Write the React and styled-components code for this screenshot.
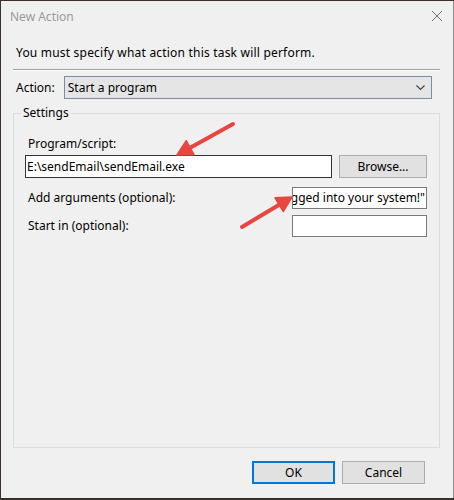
import React from "react";
import styled, { createGlobalStyle } from "styled-components";

const Global = createGlobalStyle`
  html, body { margin: 0; padding: 0; }
  body {
    background: #3a2f2a;
    width: 454px;
    height: 500px;
    overflow: hidden;
    font-family: "Noto Sans", "Open Sans", "Liberation Sans", sans-serif;
    font-size: 12px;
    color: #000;
  }
`;

const Window = styled.div`
  position: relative;
  margin: 1px 0 0 1px;
  width: 452px;
  height: 497px;
  background: #f0f0f0;
  border-right: 1px solid #8a8a8a;
  display: flex;
  flex-direction: column;
`;

const TitleBar = styled.div`
  height: 30px;
  display: flex;
  align-items: center;
  justify-content: space-between;
  padding: 0 10px 0 9px;
`;

const Title = styled.span`
  color: #9a9a9a;
  font-size: 12px;
`;

const Close = styled.svg`
  width: 12px;
  height: 12px;
  display: block;
`;

const Body = styled.div`
  flex: 1;
  display: flex;
  flex-direction: column;
  padding: 0 12px 0 12px;
`;

const Intro = styled.p`
  margin: 14px 0 0 3px;
  line-height: 16px;
  letter-spacing: 0.2px;
`;

const Separator = styled.hr`
  margin: 8px 0 0 0;
  width: 427px;
  border: 0;
  border-top: 1px solid #a0a0a0;
  border-bottom: 1px solid #ffffff;
  height: 0;
`;

const ActionRow = styled.div`
  display: flex;
  align-items: center;
  margin-top: 5px;
`;

const Label = styled.span`
  white-space: nowrap;
  line-height: 16px;
  margin-left: ${(p) => p.$indent || 0}px;
`;

const Select = styled.div`
  margin-left: 9px;
  width: 368px;
  height: 23px;
  box-sizing: border-box;
  border: 1px solid #7a8da4;
  background: #e5e5e5;
  display: flex;
  align-items: center;
  justify-content: space-between;
  padding: 0 6px 0 3px;
`;

const Chevron = styled.svg`
  width: 9px;
  height: 6px;
  display: block;
`;

const Group = styled.fieldset`
  margin: 6px 0 0 0;
  width: 427px;
  height: 343px;
  box-sizing: border-box;
  border: 1px solid #dcdcdc;
  padding: 0;
`;

const Legend = styled.legend`
  margin-left: 7px;
  padding: 0 2px;
  line-height: 16px;
`;

const Form = styled.div`
  display: flex;
  flex-direction: column;
  padding: 15px 12px 0 11px;
`;

const FieldRow = styled.div`
  display: flex;
  align-items: center;
  justify-content: space-between;
  margin-top: ${(p) => p.$gap || 0}px;
`;

const TextBox = styled.div`
  box-sizing: border-box;
  width: ${(p) => p.$w}px;
  height: ${(p) => p.$h || 22}px;
  border: 1px solid ${(p) => (p.$dark ? "#333333" : "#7a7a7a")};
  background: #fff;
  display: flex;
  align-items: center;
  justify-content: ${(p) => (p.$end ? "flex-end" : "flex-start")};
  padding: 0 1px;
  overflow: hidden;
  white-space: nowrap;
  line-height: 16px;
`;

const Button = styled.button`
  box-sizing: border-box;
  width: ${(p) => p.$w || 83}px;
  height: 23px;
  padding: 0;
  font: inherit;
  color: #000;
  background: #e1e1e1;
  border: ${(p) => (p.$default ? "2px solid #0078d7" : "1px solid #adadad")};
`;

const Footer = styled.div`
  display: flex;
  justify-content: flex-end;
  gap: 7px;
  padding: 13px 16px 0 0;
`;

const Arrows = styled.svg`
  position: absolute;
  left: -1px;
  top: -1px;
  width: 454px;
  height: 500px;
  pointer-events: none;
`;

function Arrow({ x1, y1, x2, y2 }) {
  const dx = x2 - x1;
  const dy = y2 - y1;
  const len = Math.hypot(dx, dy);
  const ux = dx / len;
  const uy = dy / len;
  const hl = 15;
  const hw = 8;
  const bx = x2 - ux * hl;
  const by = y2 - uy * hl;
  const pts = [
    `${x2},${y2}`,
    `${bx - uy * hw},${by + ux * hw}`,
    `${bx + uy * hw},${by - ux * hw}`,
  ].join(" ");
  return (
    <g>
      <line
        x1={x1}
        y1={y1}
        x2={bx + ux * 2}
        y2={by + uy * 2}
        stroke="#e8463f"
        strokeWidth="4"
        strokeLinecap="round"
      />
      <polygon points={pts} fill="#e8463f" strokeLinejoin="round" stroke="#e8463f" strokeWidth="1.5" />
    </g>
  );
}

export default function App() {
  return (
    <>
      <Global />
      <Window>
        <TitleBar>
          <Title>New Action</Title>
          <Close viewBox="0 0 12 12">
            <path d="M1 1 L11 11 M11 1 L1 11" stroke="#6f6f6f" strokeWidth="1" />
          </Close>
        </TitleBar>
        <Body>
          <Intro>You must specify what action this task will perform.</Intro>
          <Separator />
          <ActionRow>
            <Label $indent={3}>Action:</Label>
            <Select>
              <span>Start a program</span>
              <Chevron viewBox="0 0 9 6">
                <path d="M0.5 0.5 L4.5 4.5 L8.5 0.5" fill="none" stroke="#444" strokeWidth="1.2" />
              </Chevron>
            </Select>
          </ActionRow>
          <Group>
            <Legend>Settings</Legend>
            <Form>
              <Label $indent={3}>Program/script:</Label>
              <FieldRow $gap={3}>
                <TextBox $w={307} $h={23} $dark>{"E:\\sendEmail\\sendEmail.exe"}</TextBox>
                <Button $w={88}>Browse...</Button>
              </FieldRow>
              <FieldRow $gap={9}>
                <Label $indent={3}>Add arguments (optional):</Label>
                <TextBox $w={135} $end>{'logged into your system!"'}</TextBox>
              </FieldRow>
              <FieldRow $gap={6}>
                <Label $indent={3}>Start in (optional):</Label>
                <TextBox $w={135} />
              </FieldRow>
            </Form>
          </Group>
          <Footer>
            <Button $default>OK</Button>
            <Button>Cancel</Button>
          </Footer>
        </Body>
        <Arrows viewBox="0 0 454 500">
          <Arrow x1={233} y1={124} x2={177} y2={155} />
          <Arrow x1={242} y1={227} x2={292} y2={197} />
        </Arrows>
      </Window>
    </>
  );
}
